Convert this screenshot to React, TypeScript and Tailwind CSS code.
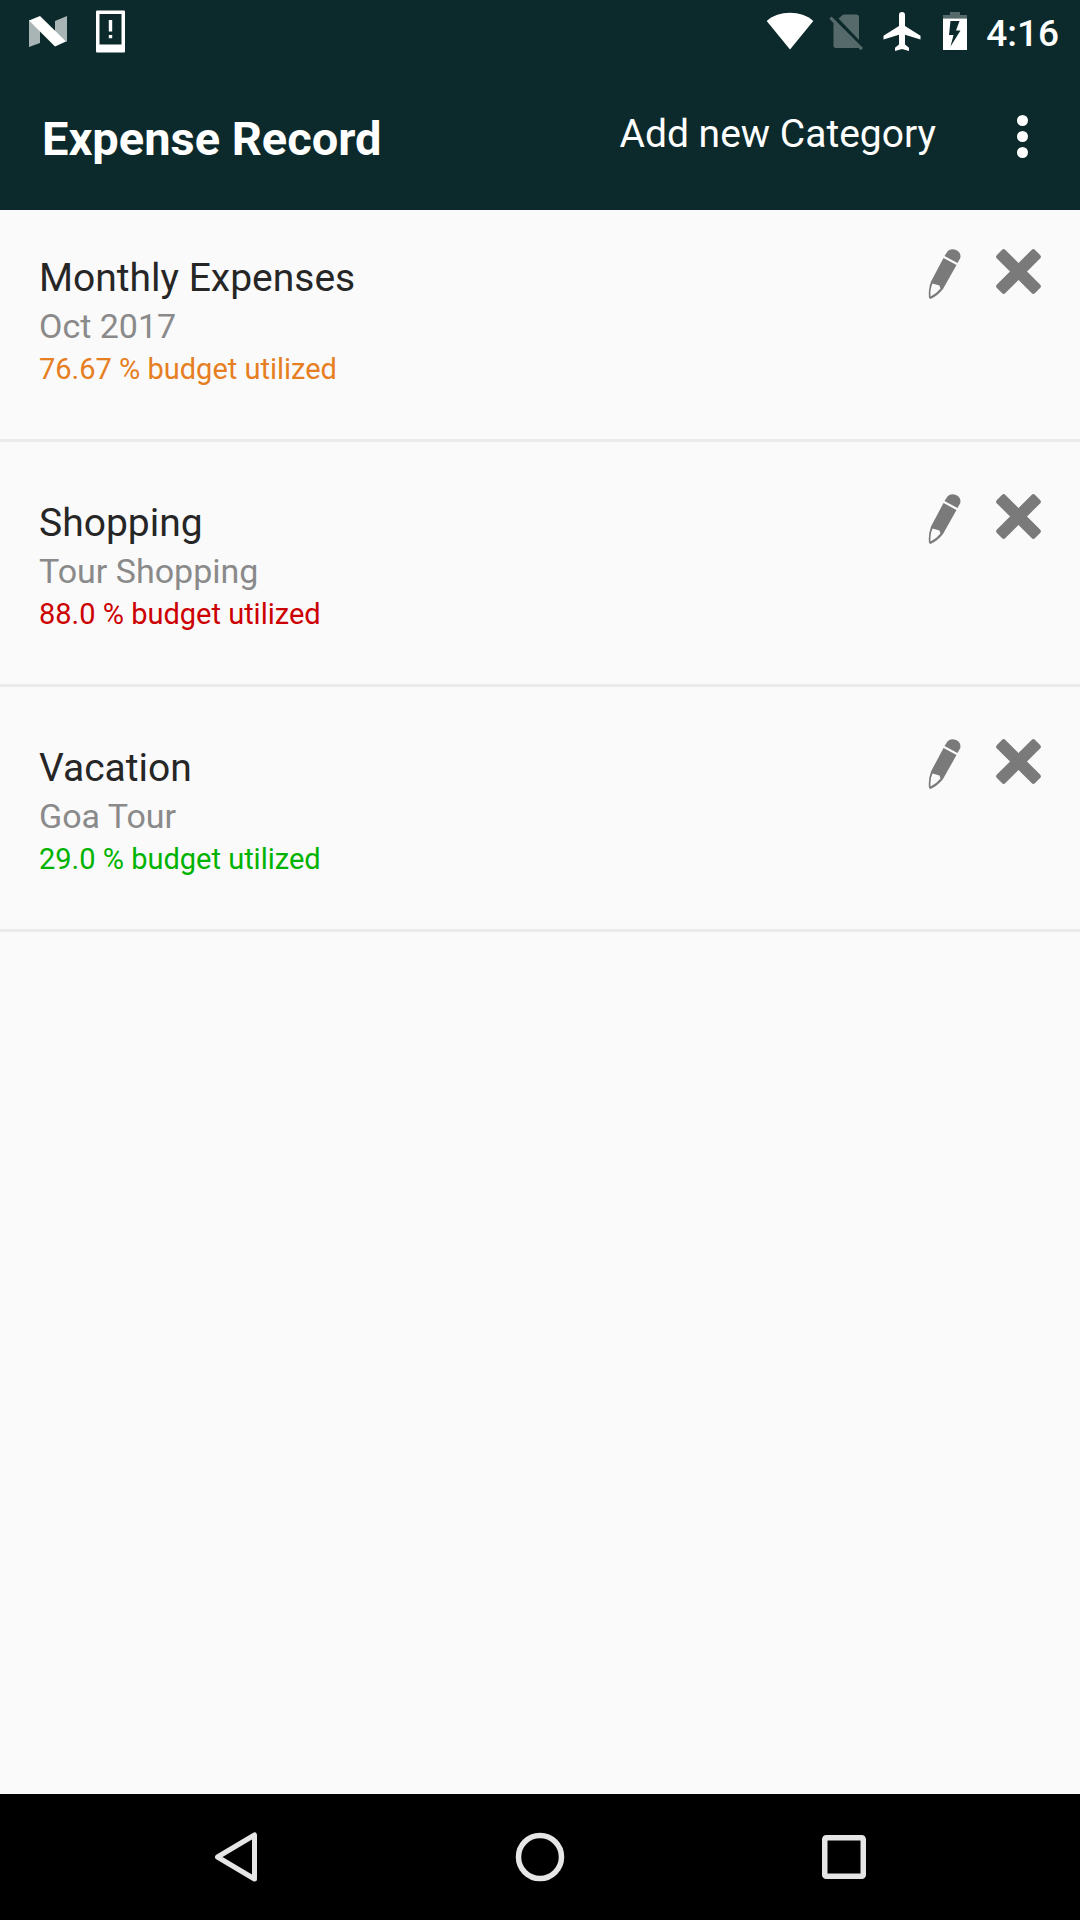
type Category = { name: string; note: string; used: string; tone: string };

const categories: Category[] = [
  { name: "Monthly Expenses", note: "Oct 2017", used: "76.67", tone: "text-[#e67e22]" },
  { name: "Shopping", note: "Tour Shopping", used: "88.0", tone: "text-[#cc0000]" },
  { name: "Vacation", note: "Goa Tour", used: "29.0", tone: "text-[#00b300]" },
];

function StatusBar() {
  return (
    <div className="flex h-[63px] items-start justify-between pr-[21px] pl-7">
      <div className="flex h-full gap-7 text-white">
        <svg className="h-[63px] w-10" viewBox="0 0 40 63" aria-hidden="true">
          <path d="M1 20 12 27V43L1 47Z" fill="#a9b5b5" />
          <path d="M27 21 39 16V42L27 35Z" fill="#a9b5b5" />
          <path d="M1 20.500 12 16 38 41.500 27 46.500Z" fill="#fff" />
        </svg>
        <svg className="h-[63px] w-[29px]" viewBox="0 0 29 63" fill="#fff" aria-hidden="true">
          <path fillRule="evenodd" d="M1 10.500H28Q29 10.500 29 11.500V51.500Q29 52.500 28 52.500H1Q0 52.500 0 51.500V11.500Q0 10.500 1 10.500ZM3.500 14V44.500H25.500V14Z" />
          <path d="M12.800 20H16.200V31.500H12.800ZM12.800 35H16.200V38.300H12.800Z" />
        </svg>
      </div>
      <div className="flex h-full items-start">
        <svg className="mr-[15px] h-[63px] w-[48px]" viewBox="0 0 48 63" fill="#fff" aria-hidden="true">
          <path d="M24 49.500 0.700 21C7 15.500 15 12.800 24 12.800S41 15.500 47.300 21Z" />
        </svg>
        <svg className="mr-[20px] h-[63px] w-[34px]" viewBox="0 0 34 63" fill="#566a6b" aria-hidden="true">
          <path d="M9.500 18.500 13.300 15.200Q14 14.500 15 14.500H27.500Q30 14.500 30 17V40ZM4.500 22.500 29.500 47.500Q29 48 27.500 48H7Q4.500 48 4.500 45.500Z" />
          <path d="M2.500 16.500 34 48 31.800 50.200 0.300 18.700Z" />
        </svg>
        <svg className="mr-[22px] h-[63px] w-[38px]" viewBox="0 0 38 63" fill="#fff" aria-hidden="true">
          <path d="M37.500 39.500V35.800L22 26V15Q22 12 19 12T16 15V26L0.500 35.800V39.500L16 34.700V44.500L12 47.700V51L19 48.900 26 51V47.700L22 44.500V34.700Z" />
        </svg>
        <svg className="mr-[19px] h-[63px] w-[24px]" viewBox="0 0 24 63" aria-hidden="true">
          <path d="M7 12H17V15H24V18.500H0V15H7Z" fill="#566a6b" />
          <path fillRule="evenodd" d="M0 18.500H24V50H0ZM7.500 21 6 35H10.500L7.500 46.500 17.500 30.500H13L16.500 21Z" fill="#fff" />
        </svg>
        <time className="pt-1 text-[37px] leading-[60px] font-medium">4:16</time>
      </div>
    </div>
  );
}

function AppBar() {
  return (
    <div className="flex h-[147px] items-center justify-between pl-[42px]">
      <h1 className="pt-1 text-[47px] leading-[56px] font-bold">Expense Record</h1>
      <div className="flex items-center">
        <button className="pr-7 pb-[6px] text-[39px] leading-[48px]">Add new Category</button>
        <button className="flex w-[116px] flex-col items-center gap-[5px] py-4" aria-label="More options">
          <span className="size-[11px] rounded-full bg-white" />
          <span className="size-[11px] rounded-full bg-white" />
          <span className="size-[11px] rounded-full bg-white" />
        </button>
      </div>
    </div>
  );
}

function PencilIcon() {
  return (
    <svg className="h-[52px] w-[34px]" viewBox="0 0 34 52" fill="#7a7a7a" aria-hidden="true">
      <path d="M18.500 4Q21 -0.500 26.500 0.500 33.500 2.500 32.300 9L29.500 14 16.500 7Z" />
      <path fillRule="evenodd" d="M15.500 9 28.500 16 15 40Q9.500 47 2.500 50L1 49Q0 41 3 32.500ZM4.600 34.500Q1.800 40 2.600 47.500 8.500 44.500 12.500 39.500L11.500 36.500Z" />
    </svg>
  );
}

function CrossIcon() {
  return (
    <svg className="h-[46px] w-[46px]" viewBox="0 0 46 46" fill="#7a7a7a" aria-hidden="true">
      <g transform="rotate(45 22.500 22.500)">
        <rect x="-4.500" y="16.500" width="54" height="12" rx="2.500" />
        <rect x="16.500" y="-4.500" width="12" height="54" rx="2.500" />
      </g>
    </svg>
  );
}

function CategoryRow({ name, note, used, tone }: Category) {
  return (
    <li className="flex items-start justify-between border-b-3 border-[#ebebeb] pr-[38px] pb-[50px] pl-[39px]">
      <div className="pt-[43px]">
        <h2 className="text-[39px] leading-[50px] text-[#262626]">{name}</h2>
        <p className="text-[34px] leading-[46px] text-[#8a8a8a]">{note}</p>
        <p className={`text-[29px] leading-[40px] ${tone}`}>{used} % budget utilized</p>
      </div>
      <div className="flex items-start gap-[34px] pt-[39px]">
        <button aria-label={`Edit ${name}`}>
          <PencilIcon />
        </button>
        <button aria-label={`Delete ${name}`}>
          <CrossIcon />
        </button>
      </div>
    </li>
  );
}

function NavigationBar() {
  return (
    <nav className="flex h-[126px] items-center justify-center gap-[204px] bg-black text-[#e6e6e6]" aria-label="System">
      <button className="flex w-[100px] justify-center" aria-label="Back">
        <svg className="size-[54px]" viewBox="0 0 54 54" fill="none" stroke="currentColor" strokeWidth="5" strokeLinejoin="round" aria-hidden="true">
          <path d="M45.500 5V49L8.500 27Z" />
        </svg>
      </button>
      <button className="flex w-[100px] justify-center" aria-label="Home">
        <svg className="size-[54px]" viewBox="0 0 54 54" fill="none" stroke="currentColor" strokeWidth="5.500" aria-hidden="true">
          <circle cx="27" cy="27" r="21.500" />
        </svg>
      </button>
      <button className="flex w-[100px] justify-center" aria-label="Recent apps">
        <svg className="size-[54px]" viewBox="0 0 54 54" fill="none" stroke="currentColor" strokeWidth="5.500" aria-hidden="true">
          <rect x="7.750" y="7.750" width="38.500" height="38.500" rx="1.500" />
        </svg>
      </button>
    </nav>
  );
}

export default function App() {
  return (
    <div className="flex min-h-screen flex-col bg-[#fafafa] font-['Roboto',sans-serif]">
      <header className="bg-[#0c2a2b] text-white">
        <StatusBar />
        <AppBar />
      </header>
      <main className="flex-1">
        <ul className="flex flex-col gap-[13px]">
          {categories.map((category) => (
            <CategoryRow key={category.name} {...category} />
          ))}
        </ul>
      </main>
      <NavigationBar />
    </div>
  );
}
